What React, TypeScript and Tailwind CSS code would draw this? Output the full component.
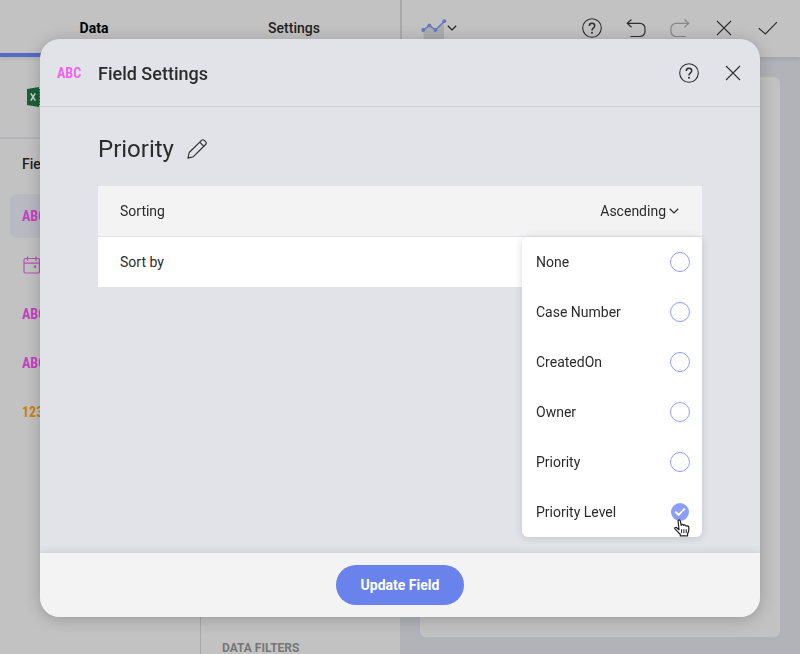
import { useState } from "react";
import type { ReactNode } from "react";

function HelpIcon() {
  return (
    <svg viewBox="0 0 20 20" className="h-5 w-5" fill="none" stroke="currentColor" strokeWidth="1.1">
      <circle cx="10" cy="10" r="9.3" />
      <path d="M7.3 7.9C7.3 6.2 8.4 5.3 10 5.3s2.7 1 2.7 2.4c0 1.3-.8 1.9-1.6 2.6-.7.6-1.1 1-1.1 2.1" strokeWidth="1.5" />
      <circle cx="10" cy="14.8" r="1" fill="currentColor" stroke="none" />
    </svg>
  );
}

function CloseIcon() {
  return (
    <svg viewBox="0 0 20 20" className="h-5 w-5" fill="none" stroke="currentColor" strokeWidth="1.1">
      <path d="M3 3l14 14M17 3L3 17" />
    </svg>
  );
}

function UndoIcon() {
  return (
    <svg viewBox="0 0 20 20" className="h-5 w-5" fill="none" stroke="currentColor" strokeWidth="1.2">
      <path d="M5.500 1.500L1.200 5.300l4.300 3.900M1.200 5.300H14a5 5 0 0 1 5 5v3.200a5 5 0 0 1-5 5H4.400" />
    </svg>
  );
}

function RedoIcon() {
  return (
    <svg viewBox="0 0 20 20" className="h-5 w-5" fill="none" stroke="currentColor" strokeWidth="1.2">
      <path d="M14.500 1.500l4.300 3.800-4.300 3.900M18.800 5.300H6a5 5 0 0 0-5 5v3.200a5 5 0 0 0 5 5h9.600" />
    </svg>
  );
}

function CheckIcon() {
  return (
    <svg viewBox="0 0 20 20" className="h-5 w-5" fill="none" stroke="currentColor" strokeWidth="1.2">
      <path d="M.8 10.300l6.600 5.700L19 4.200" />
    </svg>
  );
}

function ChevronIcon() {
  return (
    <svg viewBox="0 0 10 6" className="h-[6px] w-[10px]" fill="none" stroke="currentColor" strokeWidth="1.2">
      <path d="M.8 .8L5 4.900 9.200 .8" />
    </svg>
  );
}

function LineChartIcon() {
  return (
    <svg viewBox="0 0 26 24" className="h-6 w-[26px]">
      <path d="M2.500 14L8.500 9.400l6 4.600L23 5.300V24H2.500z" fill="#adadad" />
      <path d="M2.500 14L8.500 9.400l6 4.600 9-9" fill="none" stroke="#6678c0" strokeWidth="1.4" />
      <g fill="#6678c0">
        <circle cx="2.300" cy="14" r="1.900" />
        <circle cx="8.400" cy="9.400" r="1.900" />
        <circle cx="14.400" cy="14" r="1.900" />
        <circle cx="23.300" cy="5.200" r="1.900" />
      </g>
    </svg>
  );
}

function ExcelIcon() {
  return (
    <svg viewBox="0 0 22 20" className="h-5 w-[22px]">
      <path d="M12 2.500h9v15h-9z" fill="#c2c8c4" stroke="#1a6038" strokeWidth="1" />
      <path d="M12 5.500h7M12 8.500h7M12 11.500h7M12 14.500h7" stroke="#1a6038" strokeWidth="1.600" />
      <path d="M0 2l12-2v20L0 18z" fill="#1a6038" />
      <path d="M3.800 6.300l4.500 7.400M8.300 6.300L3.800 13.700" stroke="#c8d0cb" strokeWidth="1.600" />
    </svg>
  );
}

function CalendarIcon() {
  return (
    <svg viewBox="0 0 18 18" className="h-[18px] w-[18px]" fill="none" stroke="#b94fbd" strokeWidth="1.200">
      <rect x="2" y="2.500" width="15.500" height="14.500" rx="1.500" />
      <path d="M2 7.200h15.500M5.500 .5v4.300M14 .5v4.300" />
      <rect x="11.800" y="9.500" width="2.300" height="2.300" fill="#b94fbd" stroke="none" />
    </svg>
  );
}

function PencilIcon() {
  return (
    <svg viewBox="0 0 20 20" className="h-5 w-5" fill="none" stroke="currentColor" strokeWidth="1.100" strokeLinejoin="round">
      <path d="M.9 19.100l1.300-5.600L14.500 1.400a2 2 0 0 1 2.800 0l1.300 1.300a2 2 0 0 1 0 2.800L6.400 17.700z" />
      <path d="M12.700 3.200l4.100 4.100" />
    </svg>
  );
}

function HandPointer() {
  return (
    <svg viewBox="0 0 16 18" className="pointer-events-none absolute right-3 bottom-0 z-10 h-[18px] w-4" fill="#fff" stroke="#222" strokeWidth="1.200" strokeLinejoin="round">
      <path d="M5 10.800L4.200 3.300C3.900 1.300 4.400.8 5 .8c.8 0 1.200.6 1.400 1.500l.8 4c.2-1.200 2.200-1.200 2.500.2.500-.9 2.100-.7 2.400.6.900-.7 2.500-.2 2.700 1.300.2 2.100-.1 4.300-1.200 6.300v2.200H6.300v-1.500C4.800 13.900 3 12.200 1 9.900c-.7-.9.3-2 1.400-1.400z" />
      <path d="M7.600 10.200v4M9.900 10.200v4M12.200 10.200v4" fill="none" strokeWidth="1" />
    </svg>
  );
}

function IconButton({ label, children, disabled }: { label: string; children: ReactNode; disabled?: boolean }) {
  return (
    <button
      type="button"
      aria-label={label}
      disabled={disabled}
      className="flex h-11 w-11 items-center justify-center text-[#2f2f2f] disabled:text-[#888888]"
    >
      {children}
    </button>
  );
}

const typeLabel = "font-['Roboto_Condensed','Liberation_Sans_Narrow',Roboto,sans-serif] text-sm font-bold";

const fieldTypes = ["ABC", "date", "ABC", "ABC", "123"];

function FieldType({ type }: { type: string }) {
  if (type === "date") return <CalendarIcon />;
  return <span className={`${typeLabel} ${type === "ABC" ? "text-[#c83fc4]" : "text-[#c98012]"}`}>{type}</span>;
}

function Editor() {
  return (
    <div className="flex min-h-screen flex-col bg-[#b2b3b9]">
      <header className="relative flex h-[57px] bg-[#c2c2c2] shadow-[0_1px_5px_rgba(0,0,0,0.12)]">
        <nav className="flex w-[400px] shrink-0 text-sm font-medium text-[#222222]">
          <button type="button" className="w-1/2 border-b-4 border-[#566ac6] pt-[3px] pr-3 font-bold text-black">Data</button>
          <button type="button" className="w-1/2 border-b-4 border-transparent pt-[3px] pr-3">Settings</button>
        </nav>
        <div className="flex flex-1 items-center justify-between border-l-2 border-[#a9a9a9] pr-[10px] pb-px pl-[19px]">
          <button type="button" aria-label="Chart type" className="flex items-center text-[#222222]">
            <LineChartIcon />
            <ChevronIcon />
          </button>
          <div className="flex">
            <IconButton label="Help"><HelpIcon /></IconButton>
            <IconButton label="Undo"><UndoIcon /></IconButton>
            <IconButton label="Redo" disabled><RedoIcon /></IconButton>
            <IconButton label="Cancel"><CloseIcon /></IconButton>
            <IconButton label="Apply"><CheckIcon /></IconButton>
          </div>
        </div>
      </header>
      <div className="flex flex-1">
        <aside className="w-[201px] shrink-0 border-r border-[#a9a9ab] bg-[#c2c2c2]">
          <div className="flex h-[82px] items-center border-b-2 border-[#b4b4bb] pl-[27px]">
            <ExcelIcon />
          </div>
          <h2 className="pt-[15px] pl-[22px] text-sm font-medium text-[#222222]">Fields</h2>
          <ul className="flex flex-col gap-[5px] px-[10px] pt-5">
            {fieldTypes.map((type, i) => (
              <li key={i} className={`flex h-11 items-center rounded-lg pl-3 ${i === 0 ? "bg-[#b8b9c1]" : ""}`}>
                <FieldType type={type} />
              </li>
            ))}
          </ul>
        </aside>
        <section className="flex w-[199px] shrink-0 flex-col justify-end bg-[#c2c2c2] pl-[21px]">
          <h2 className="text-xs leading-3 font-bold text-[#777777]">DATA FILTERS</h2>
        </section>
        <main className="flex flex-1 px-5 pt-5 pb-[17px]">
          <div className="flex-1 rounded-md bg-[#c2c2c2]" />
        </main>
      </div>
    </div>
  );
}

const sortFields = ["None", "Case Number", "CreatedOn", "Owner", "Priority", "Priority Level"];

function SortByMenu() {
  const [selected, setSelected] = useState("Priority Level");
  return (
    <div
      role="radiogroup"
      aria-labelledby="sort-by"
      className="absolute top-0 right-0 w-[180px] rounded-md bg-white shadow-[0_1px_8px_rgba(0,0,0,0.14)]"
    >
      {sortFields.map((field) => (
        <label key={field} className="flex h-[50px] items-center justify-between pr-3 pl-[14px]">
          {field}
          <span className="relative flex h-5 w-5 items-center justify-center">
            <input
              type="radio"
              name="sort-by"
              checked={selected === field}
              onChange={() => setSelected(field)}
              className="peer h-5 w-5 appearance-none rounded-full border border-[#8b9ff9] checked:h-[18px] checked:w-[18px] checked:border-0 checked:bg-[#8b9ff9]"
            />
            <svg
              viewBox="0 0 12 10"
              className="pointer-events-none absolute hidden h-[10px] w-3 peer-checked:block"
              fill="none"
              stroke="#fff"
              strokeWidth="2"
            >
              <path d="M1.200 4.600l3.400 3.300L10.800 1.600" />
            </svg>
          </span>
        </label>
      ))}
      <HandPointer />
    </div>
  );
}

function FieldSettingsDialog() {
  return (
    <div
      role="dialog"
      aria-modal="true"
      aria-labelledby="dialog-title"
      className="flex flex-1 flex-col overflow-hidden rounded-[20px] bg-[#e2e3e8] shadow-[0_2px_16px_rgba(0,0,0,0.22)]"
    >
      <header className="flex h-[68px] shrink-0 items-center border-b border-[#cfd0d6] pt-px pr-[5px] pl-[17px]">
        <span className={`${typeLabel} w-[41px] text-[#f062ec]`}>ABC</span>
        <h1 id="dialog-title" className="flex-1 pt-px text-lg font-medium">Field Settings</h1>
        <IconButton label="Help"><HelpIcon /></IconButton>
        <IconButton label="Close"><CloseIcon /></IconButton>
      </header>
      <div className="flex-1 px-[58px] pt-6">
        <div className="flex items-center gap-[13px]">
          <h2 className="text-2xl leading-9">Priority</h2>
          <button type="button" aria-label="Rename field"><PencilIcon /></button>
        </div>
        <div className="mt-[19px]">
          <div className="flex h-[51px] items-center justify-between border-b border-[#e2e3e8] bg-[#f3f3f3] pr-[23px] pl-[22px]">
            <label htmlFor="sorting">Sorting</label>
            <span className="flex items-center gap-[3px]">
              <select id="sorting" defaultValue="Ascending" className="appearance-none field-sizing-content">
                <option>Ascending</option>
              </select>
              <ChevronIcon />
            </span>
          </div>
          <div className="relative flex h-[50px] items-center bg-white pl-[22px]">
            <span id="sort-by">Sort by</span>
            <SortByMenu />
          </div>
        </div>
      </div>
      <footer className="flex h-16 shrink-0 items-center justify-center bg-[#f3f3f3] shadow-[0_-1px_8px_rgba(0,0,0,0.1)]">
        <button type="button" className="h-10 rounded-full bg-[#6a82ec] px-[25px] font-bold text-white">Update Field</button>
      </footer>
    </div>
  );
}

export default function App() {
  return (
    <div className="font-[Roboto,sans-serif] text-sm text-[#2b2b2b]">
      <Editor />
      <div className="fixed inset-0 flex px-10 pt-[39px] pb-[37px]">
        <FieldSettingsDialog />
      </div>
    </div>
  );
}
